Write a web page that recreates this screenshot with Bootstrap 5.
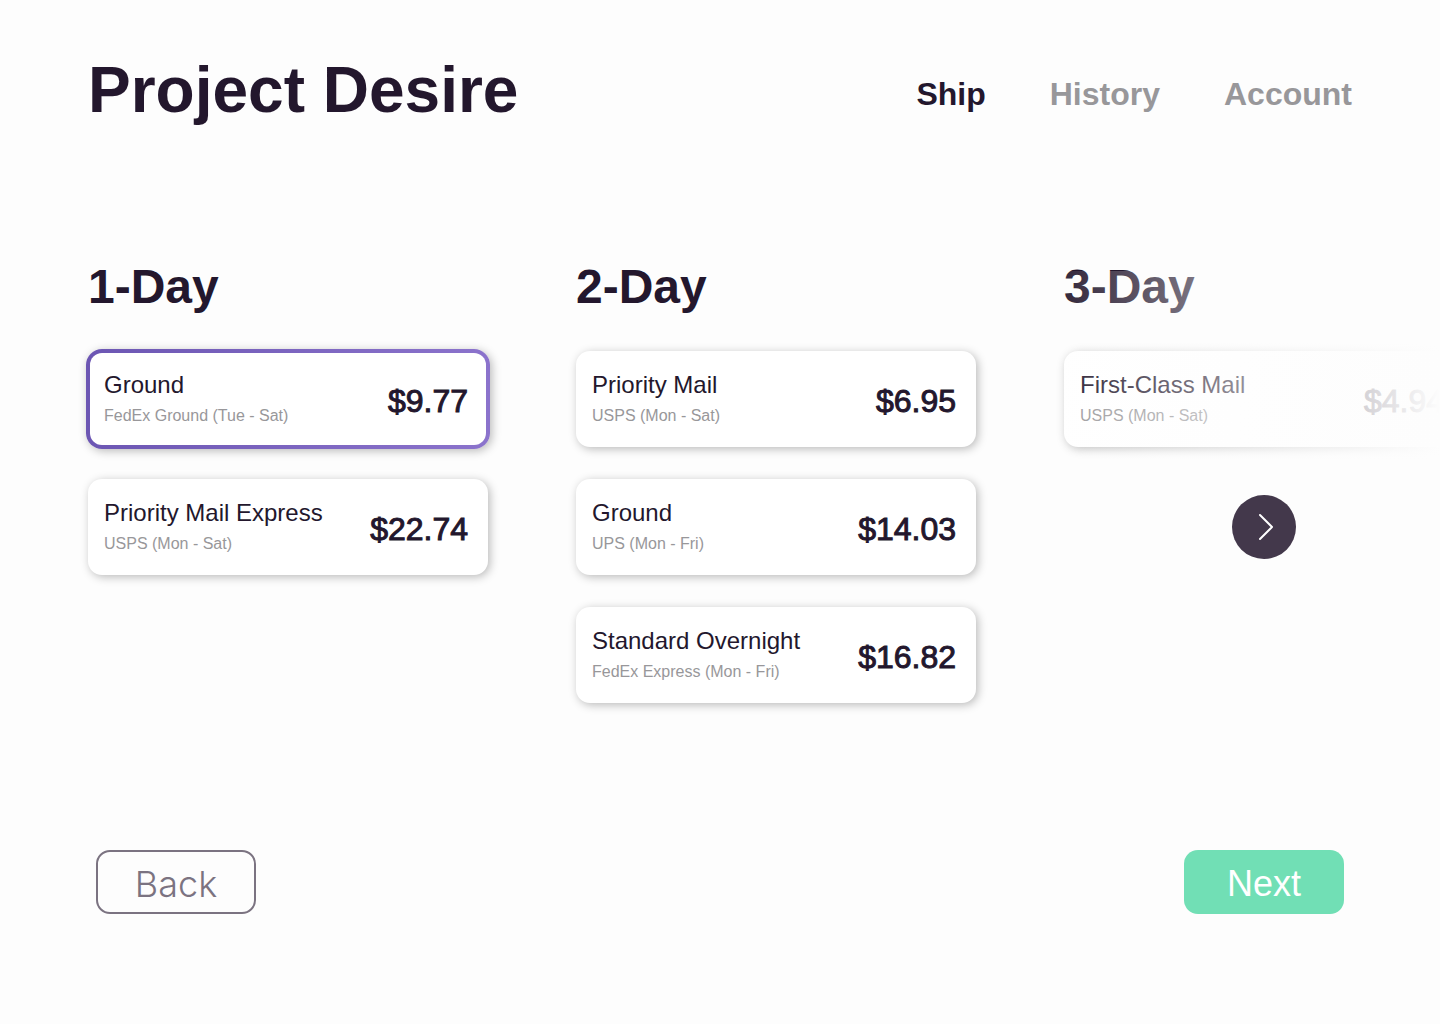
<!DOCTYPE html>
<html lang="en">
<head>
<meta charset="utf-8">
<meta name="viewport" content="width=device-width, initial-scale=1">
<title>Project Desire</title>
<link href="https://cdn.jsdelivr.net/npm/bootstrap@5.3.0/dist/css/bootstrap.min.css" rel="stylesheet">
<style>
  :root { --ink: #23172d; --muted: #98979a; --page: #fdfdfd; --gutter: 88px; }
  body { background: var(--page); color: var(--ink); font-family: "Liberation Sans", Arial, sans-serif; }
  .site-head { padding: 52px var(--gutter) 0; }
  .brand-title { font-size: 64px; line-height: 76px; font-weight: 700; }
  .site-nav { gap: 64px; padding-top: 8px; }
  .site-nav a { font-size: 32px; line-height: 40px; font-weight: 700; padding: 0; color: var(--muted); }
  .site-nav a.active { color: var(--ink); }
  .rates { margin-top: 128px; }
  .rate-track { gap: var(--gutter); padding: 0 0 16px var(--gutter); }
  .rate-group { width: 400px; gap: 32px; }
  .rate-group legend { font-size: 48px; line-height: 62px; font-weight: 700; float: none; margin: 0 0 33px; }
  .rate-option { height: 96px; padding: 2px 20px 0 16px; border-radius: 14px; background: #fff;
    box-shadow: 2px 2px 10px rgba(0, 0, 0, .27); cursor: pointer; }
  .btn-check:checked + .rate-option { height: 100px; margin: -2px; padding: 2px 18px 0 14px; border: 4px solid transparent; border-radius: 16px;
    background: linear-gradient(#fff, #fff) padding-box, linear-gradient(90deg, #6c56b3, #8b73cc) border-box; }
  .rate-name { font-size: 24px; line-height: 32px; }
  .rate-info { font-size: 16px; line-height: 30px; color: var(--muted); }
  .rate-price { font-size: 32px; line-height: 40px; padding-top: 2px; -webkit-text-stroke: 1px var(--ink); }
  .rate-fade { top: 15px; bottom: 16px; right: 0; width: 408px; pointer-events: none;
    background: linear-gradient(90deg, rgba(253, 253, 253, 0), #fdfdfd); }
  .more-btn { right: 144px; top: 239px; width: 64px; height: 64px; background: #43384b; }
  .step-row { padding: 0 96px 110px; }
  .step-btn { width: 160px; height: 64px; border-radius: 14px; font-size: 36px; line-height: 60px; padding: 4px 0 0; }
  .step-back, .step-back:hover { border: 2px solid #7b7381; color: #7b7381; font-family: Inter, "Liberation Sans", sans-serif; font-weight: 300; padding-top: 2px; }
  .step-next, .step-next:hover { border: 0; background: #71dfb5; color: #fff; }
</style>
</head>
<body class="min-vh-100 d-flex flex-column overflow-x-hidden">
<header class="site-head d-flex flex-wrap justify-content-between align-items-center">
  <h1 class="brand-title mb-0">Project Desire</h1>
  <nav class="site-nav nav" aria-label="Main">
    <a class="nav-link active" href="#" aria-current="page">Ship</a>
    <a class="nav-link" href="#">History</a>
    <a class="nav-link" href="#">Account</a>
  </nav>
</header>

<main class="rates position-relative overflow-hidden mb-5">
  <div class="rate-track d-flex">
    <fieldset class="rate-group d-flex flex-column flex-shrink-0">
      <legend>1-Day</legend>
      <input class="btn-check" type="radio" name="rate" id="r1" checked>
      <label class="rate-option d-flex align-items-center justify-content-between" for="r1">
        <span class="d-flex flex-column"><span class="rate-name">Ground</span><span class="rate-info">FedEx Ground (Tue - Sat)</span></span>
        <span class="rate-price">$9.77</span>
      </label>
      <input class="btn-check" type="radio" name="rate" id="r2">
      <label class="rate-option d-flex align-items-center justify-content-between" for="r2">
        <span class="d-flex flex-column"><span class="rate-name">Priority Mail Express</span><span class="rate-info">USPS (Mon - Sat)</span></span>
        <span class="rate-price">$22.74</span>
      </label>
    </fieldset>
    <fieldset class="rate-group d-flex flex-column flex-shrink-0">
      <legend>2-Day</legend>
      <input class="btn-check" type="radio" name="rate" id="r3">
      <label class="rate-option d-flex align-items-center justify-content-between" for="r3">
        <span class="d-flex flex-column"><span class="rate-name">Priority Mail</span><span class="rate-info">USPS (Mon - Sat)</span></span>
        <span class="rate-price">$6.95</span>
      </label>
      <input class="btn-check" type="radio" name="rate" id="r4">
      <label class="rate-option d-flex align-items-center justify-content-between" for="r4">
        <span class="d-flex flex-column"><span class="rate-name">Ground</span><span class="rate-info">UPS (Mon - Fri)</span></span>
        <span class="rate-price">$14.03</span>
      </label>
      <input class="btn-check" type="radio" name="rate" id="r5">
      <label class="rate-option d-flex align-items-center justify-content-between" for="r5">
        <span class="d-flex flex-column"><span class="rate-name">Standard Overnight</span><span class="rate-info">FedEx Express (Mon - Fri)</span></span>
        <span class="rate-price">$16.82</span>
      </label>
    </fieldset>
    <fieldset class="rate-group d-flex flex-column flex-shrink-0">
      <legend>3-Day</legend>
      <input class="btn-check" type="radio" name="rate" id="r6">
      <label class="rate-option d-flex align-items-center justify-content-between" for="r6">
        <span class="d-flex flex-column"><span class="rate-name">First-Class Mail</span><span class="rate-info">USPS (Mon - Sat)</span></span>
        <span class="rate-price">$4.94</span>
      </label>
    </fieldset>
  </div>
  <div class="rate-fade position-absolute"></div>
  <button class="more-btn position-absolute border-0 rounded-circle p-0" type="button" aria-label="More options">
    <svg class="d-block" width="64" height="64" viewBox="0 0 64 64" fill="none" stroke="#fff" stroke-width="2" stroke-linecap="round" stroke-linejoin="round" aria-hidden="true"><path d="M28 20 40 32 28 44"/></svg>
  </button>
</main>

<footer class="step-row d-flex justify-content-between mt-auto">
  <button class="btn step-btn step-back" type="button">Back</button>
  <button class="btn step-btn step-next" type="button">Next</button>
</footer>
<script src="https://cdn.jsdelivr.net/npm/bootstrap@5.3.0/dist/js/bootstrap.bundle.min.js"></script>
</body>
</html>
